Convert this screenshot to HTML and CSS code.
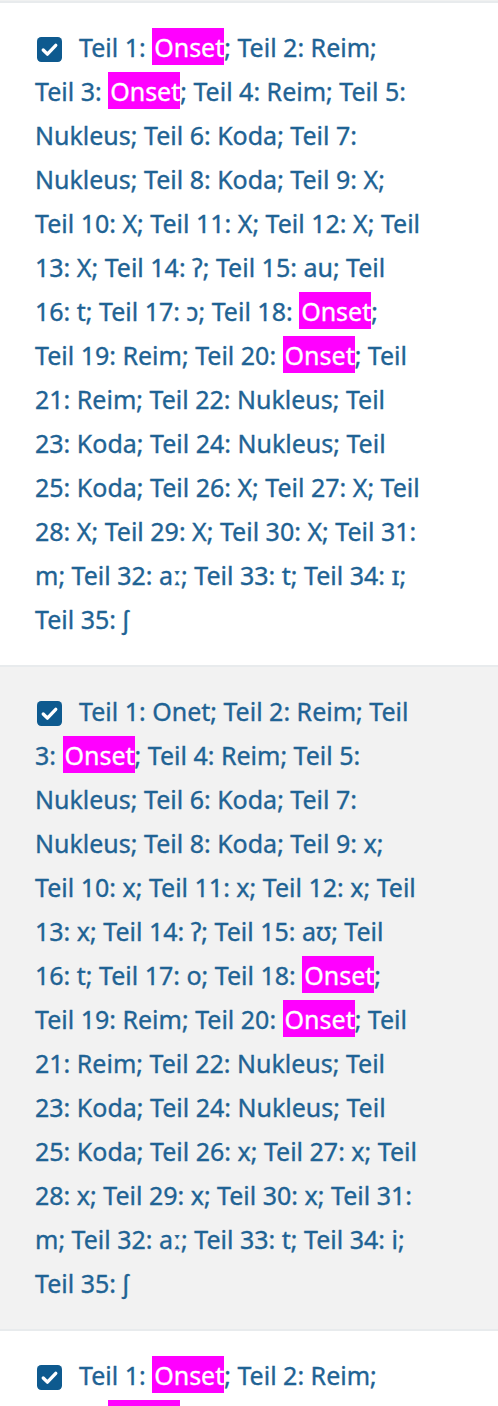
FILE: index.html
```html
<!DOCTYPE html>
<html>
<head>
  <meta charset="utf-8">
  <title>Teile</title>
  <link rel="stylesheet" href="styles.css">
</head>
<body>
  <div id="list">
    <label class="row">
      <svg class="check" viewBox="0 0 24 24"><rect width="24" height="24" rx="4"/><path d="M6 12.5l4 4 8-8.5"/></svg>Teil 1: <span class="hl">Onset</span>; Teil 2: Reim;<br>Teil 3: <span class="hl">Onset</span>; Teil 4: Reim; Teil 5:<br>Nukleus; Teil 6: Koda; Teil 7:<br>Nukleus; Teil 8: Koda; Teil 9: X;<br>Teil 10: X; Teil 11: X; Teil 12: X; Teil<br>13: X; Teil 14: ʔ; Teil 15: au; Teil<br>16: t; Teil 17: ɔ; Teil 18: <span class="hl">Onset</span>;<br>Teil 19: Reim; Teil 20: <span class="hl">Onset</span>; Teil<br>21: Reim; Teil 22: Nukleus; Teil<br>23: Koda; Teil 24: Nukleus; Teil<br>25: Koda; Teil 26: X; Teil 27: X; Teil<br>28: X; Teil 29: X; Teil 30: X; Teil 31:<br>m; Teil 32: aː; Teil 33: t; Teil 34: ɪ;<br>Teil 35: ʃ
    </label>
    <label class="row">
      <svg class="check" viewBox="0 0 24 24"><rect width="24" height="24" rx="4"/><path d="M6 12.5l4 4 8-8.5"/></svg>Teil 1: Onet; Teil 2: Reim; Teil<br>3: <span class="hl">Onset</span>; Teil 4: Reim; Teil 5:<br>Nukleus; Teil 6: Koda; Teil 7:<br>Nukleus; Teil 8: Koda; Teil 9: x;<br>Teil 10: x; Teil 11: x; Teil 12: x; Teil<br>13: x; Teil 14: ʔ; Teil 15: aʊ; Teil<br>16: t; Teil 17: o; Teil 18: <span class="hl">Onset</span>;<br>Teil 19: Reim; Teil 20: <span class="hl">Onset</span>; Teil<br>21: Reim; Teil 22: Nukleus; Teil<br>23: Koda; Teil 24: Nukleus; Teil<br>25: Koda; Teil 26: x; Teil 27: x; Teil<br>28: x; Teil 29: x; Teil 30: x; Teil 31:<br>m; Teil 32: aː; Teil 33: t; Teil 34: i;<br>Teil 35: ʃ
    </label>
    <label class="row">
      <svg class="check" viewBox="0 0 24 24"><rect width="24" height="24" rx="4"/><path d="M6 12.5l4 4 8-8.5"/></svg>Teil 1: <span class="hl">Onset</span>; Teil 2: Reim;<br>Teil 3: <span class="hl">Onset</span>; Teil 4: Reim; Teil 5:<br>Nukleus; Teil 6: Koda; Teil 7:<br>Nukleus; Teil 8: Koda; Teil 9: X;<br>Teil 10: X; Teil 11: X; Teil 12: X; Teil<br>13: X; Teil 14: ʔ; Teil 15: au; Teil<br>16: t; Teil 17: ɔ; Teil 18: <span class="hl">Onset</span>;<br>Teil 19: Reim; Teil 20: <span class="hl">Onset</span>; Teil<br>21: Reim; Teil 22: Nukleus; Teil<br>23: Koda; Teil 24: Nukleus; Teil<br>25: Koda; Teil 26: X; Teil 27: X; Teil<br>28: X; Teil 29: X; Teil 30: X; Teil 31:<br>m; Teil 32: aː; Teil 33: t; Teil 34: ɪ;<br>Teil 35: ʃ
    </label>
  </div>
</body>
</html>
```
FILE: styles.css
```css
html, body {
    padding: 0;
    margin: 0;
    background: #fff;
}

#list {
    border-top: 1px solid #f0f1f1;
}

.row {
    display: block;
    padding: 22px 20px 24px 35px;
    border-top: 2px solid #e8ebed;
    font-family: "Noto Sans", sans-serif;
    font-size: 25px;
    line-height: 44px;
    color: #1f6394;
    -webkit-text-stroke: 0.35px #1f6394;
}

.row:nth-child(even) {
    background-color: #f2f2f2;
}

.check {
    width: 25px;
    height: 25px;
    margin: 0 17px 0 2px;
    vertical-align: -5px;
}

.check rect {
    fill: #0e5a8f;
}

.check path {
    fill: none;
    stroke: #fff;
    stroke-width: 3.2;
    stroke-linecap: round;
    stroke-linejoin: round;
}

.hl {
    background-color: #ff00ff;
    color: #fff;
    -webkit-text-stroke: 0.35px #fff;
    padding: 2px 0 1px 2px;
}
```
